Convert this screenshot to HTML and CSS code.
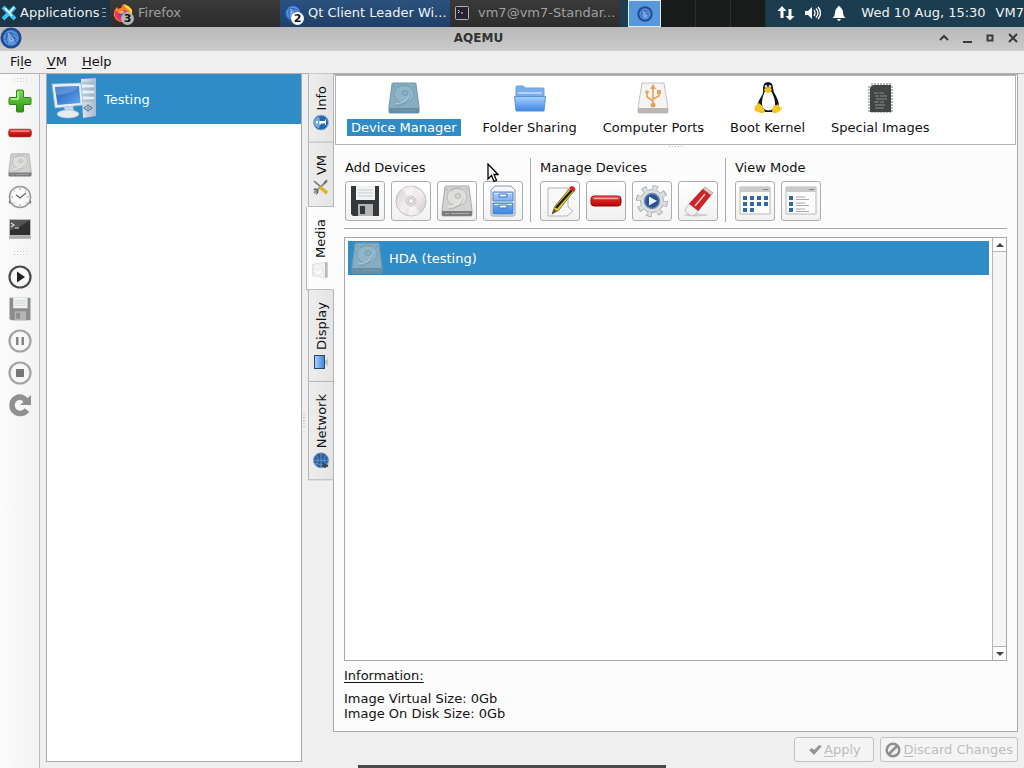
FILE: index.html
```html
<!DOCTYPE html>
<html lang="en">
<head>
    <meta charset="UTF-8">
    <meta name="viewport" content="width=device-width, initial-scale=1.0">
    <title>AQEMU</title>
    <link rel="stylesheet" href="styles.css">
</head>
<body>
    <!-- Icon set -->
    <svg class="sprite" aria-hidden="true">
        <defs>
            <linearGradient id="gBlue" x1="0" y1="0" x2="0" y2="1"><stop offset="0" stop-color="#a9d0ff"/><stop offset="1" stop-color="#3f86e0"/></linearGradient>
            <linearGradient id="gScreen" x1="0" y1="0" x2="1" y2="1"><stop offset="0" stop-color="#1c58b0"/><stop offset="1" stop-color="#66a9f2"/></linearGradient>
            <linearGradient id="gRed" x1="0" y1="0" x2="0" y2="1"><stop offset="0" stop-color="#f07070"/><stop offset="0.4" stop-color="#dd2020"/><stop offset="1" stop-color="#b00808"/></linearGradient>
            <linearGradient id="gGreen" x1="0" y1="0" x2="0" y2="1"><stop offset="0" stop-color="#7fdc50"/><stop offset="1" stop-color="#2a9410"/></linearGradient>
            <linearGradient id="gDisc" x1="0" y1="0" x2="1" y2="1"><stop offset="0" stop-color="#d6d0d2"/><stop offset="0.5" stop-color="#f4eef0"/><stop offset="1" stop-color="#cfc8ca"/></linearGradient>
            <linearGradient id="gTower" x1="0" y1="0" x2="1" y2="0"><stop offset="0" stop-color="#dfe7ef"/><stop offset="1" stop-color="#a8bccd"/></linearGradient>
        </defs>
        <symbol id="qemu" viewBox="0 0 24 24">
            <circle cx="12" cy="12" r="11.5" fill="#1f4c92"/>
            <circle cx="12" cy="12" r="8.5" fill="#5c92da"/>
            <path d="M5 8q7-4 14 2M5 14l7-8 6 11M8 18q-2-6 0-11q6 5 10 6" fill="none" stroke="#2b5fa8" stroke-width="1"/>
            <path d="M9 7l6 7-4 2z" fill="none" stroke="#b9d4f7" stroke-width="0.8"/>
        </symbol>
        <symbol id="xfce" viewBox="0 0 16 16">
            <path d="M2 2l12 12M14 2L2 14" stroke="#3fc0ee" stroke-width="4"/>
            <path d="M4 3l7 8M13 2L8 8" stroke="#e8f8ff" stroke-width="1.5"/>
        </symbol>
        <symbol id="firefox" viewBox="0 0 20 20">
            <path d="M10 1q3 1 4 4q5 3 4 8q-2 6-8 6q-7 0-9-6q-1-5 3-9l1 2q2-1 3-1z" fill="#ff7a2a"/>
            <path d="M11 1q1 4 5 6q2 4 0 8q4-3 3-8q-2-4-8-6z" fill="#ffd83a"/>
            <path d="M2 8q-1 7 5 10q5 1 8-1q-8 0-9-7z" fill="#ef2e64"/>
            <circle cx="10" cy="11" r="4" fill="#7b3fd0"/>
            <path d="M5 9l4-2 3 2-4 2z" fill="#ffae35"/>
        </symbol>
        <symbol id="term" viewBox="0 0 14 14">
            <rect x="0.5" y="0.5" width="13" height="13" rx="1" fill="#2a2230" stroke="#b4adb8"/>
            <path d="M3 4l1.500 1.500L3 7M6 7h2" fill="none" stroke="#ddd"/>
        </symbol>
        <symbol id="net" viewBox="0 0 18 16">
            <path d="M5 1l4.500 5H6.500v7H3.500V6H.5zM13 15.500L8.500 11h3V4h3v7h3z" fill="#fff"/>
        </symbol>
        <symbol id="volume" viewBox="0 0 16 14">
            <path d="M0 5h3l4-4v12L3 9H0z" fill="#fff"/>
            <path d="M9 4q2 3 0 6M11 2.500q4 4.500 0 9M13 1q5 6 0 12" fill="none" stroke="#fff" stroke-width="1.300"/>
        </symbol>
        <symbol id="bell" viewBox="0 0 14 16">
            <path d="M7 1q1.500 0 1.500 1.500Q11 4 11 8q0 3 2.500 5H.5Q3 11 3 8q0-4 2.500-5.500Q5.500 1 7 1zM5 14h4q-1 2-2 2t-2-2z" fill="#fff"/>
        </symbol>
        <symbol id="computer" viewBox="0 0 46 42">
            <path d="M30 1l15-1v38l-13 2z" fill="url(#gTower)"/>
            <path d="M31 5h12M31 11h12M31 17h12M31 23h12" stroke="#8fabc3"/>
            <path d="M31 8h12M31 14h12M31 20h12" stroke="#f2f6fa" stroke-width="1.500"/>
            <path d="M1 6l29-1 2 22-28 3z" fill="#e6eff8" stroke="#9db9d3" stroke-width="0.700"/>
            <path d="M4 9l24-1 1.500 17-23 2z" fill="url(#gScreen)"/>
            <path d="M4 9l24-1Q23 16 5 17z" fill="#7bb1ec" opacity="0.500"/>
            <path d="M13 29l9-1 1 5h-9z" fill="#c8d6e4"/>
            <ellipse cx="17" cy="36" rx="11" ry="4" fill="#e4ecf4" stroke="#a8bccf" stroke-width="0.700"/>
            <path d="M33 30l4-3 4 3-4 3z" fill="none" stroke="#6c8397" stroke-width="1.300"/>
            <circle cx="37" cy="30" r="1" fill="#6c8397"/>
        </symbol>
        <symbol id="plus" viewBox="0 0 24 24">
            <path d="M9.500 1h5q1 0 1 1v6.500H22q1 0 1 1v5q0 1-1 1h-6.500V22q0 1-1 1h-5q-1 0-1-1v-6.500H2q-1 0-1-1v-5q0-1 1-1h6.500V2q0-1 1-1z" fill="url(#gGreen)" stroke="#2f8518"/>
            <path d="M10 3v7H3" fill="none" stroke="#b8f598" stroke-width="1.500"/>
        </symbol>
        <symbol id="minus" viewBox="0 0 32 32">
            <rect x="1" y="11" width="30" height="10" rx="3" fill="url(#gRed)" stroke="#8e0a0a"/>
            <path d="M4 13.500h24" stroke="#f6a0a0" stroke-width="1.500"/>
        </symbol>
        <symbol id="hdd" viewBox="0 0 32 32">
            <path d="M5 1h22q1 0 1 1l3 23v5q0 1-1 1H2q-1 0-1-1v-5L4 2q0-1 1-1z" fill="var(--disk)" stroke="var(--disk-line)"/>
            <path d="M1 26h30v4q0 1-1 1H2q-1 0-1-1z" fill="var(--disk-base)"/>
            <ellipse cx="16" cy="12" rx="10" ry="9" fill="var(--disk-plate)" stroke="var(--disk-line)" stroke-width="0.700"/>
            <ellipse cx="17" cy="11" rx="3" ry="2.500" fill="var(--disk)" stroke="var(--disk-line)" stroke-width="0.700"/>
            <path d="M7 24q12 0 15-11M9 6q5-4 12-2M6 3v3M26 3v3" fill="none" stroke="var(--disk-line)" stroke-width="0.800"/>
            <path d="M7 22q12-1 14-9" fill="none" stroke="var(--disk-shine)"/>
            <path d="M4 28.500h4M10 28.500h18" stroke="var(--disk-line)"/>
        </symbol>
        <symbol id="clock" viewBox="0 0 24 24">
            <path d="M2 15l-1 3h3M22 15l1 3h-3" stroke="#777" fill="none"/>
            <circle cx="12" cy="12" r="10.500" fill="#fafafa" stroke="#999" stroke-width="1.500"/>
            <path d="M12 3v2M12 19v2M3 12h2M19 12h2M5.500 5.500l1 1M18.500 5.500l-1 1M5.500 18.500l1-1M18.500 18.500l-1-1" stroke="#999"/>
            <path d="M8 10l4 3 6-5" fill="none" stroke="#666" stroke-width="1.200"/>
        </symbol>
        <symbol id="console" viewBox="0 0 24 24">
            <path d="M1 2h22v20H1z" fill="#bbb"/>
            <path d="M2 3h20v15H2z" fill="#303030"/>
            <path d="M2 3h20L8 12l-6 1z" fill="#555"/>
            <path d="M3 6l3 2-3 2M7 11h4" fill="none" stroke="#ddd" stroke-width="1.200"/>
            <path d="M2 20h20" stroke="#999"/>
        </symbol>
        <symbol id="play" viewBox="0 0 24 24">
            <circle cx="12" cy="12" r="10.500" fill="#f6f6f6" stroke="#4a4a4a" stroke-width="2.200"/>
            <path d="M9 6.500l8 5.500-8 5.500z" fill="#222"/>
        </symbol>
        <symbol id="pause" viewBox="0 0 24 24">
            <circle cx="12" cy="12" r="10.500" fill="#f6f6f6" stroke="#a2a2a2" stroke-width="2.200"/>
            <path d="M8 8h2.500v8H8zM13.500 8H16v8h-2.500z" fill="#858585"/>
        </symbol>
        <symbol id="stop" viewBox="0 0 24 24">
            <circle cx="12" cy="12" r="10.500" fill="#f6f6f6" stroke="#a2a2a2" stroke-width="2.200"/>
            <path d="M8 8h8v8H8z" fill="#777"/>
        </symbol>
        <symbol id="reload" viewBox="0 0 24 24">
            <path d="M19 17q-3 4-8 3.500q-7-1.500-7-8.500q0-6 7-8q5 0 7 4" fill="none" stroke="#909090" stroke-width="5.500"/>
            <path d="M23 2v10H12z" fill="#909090"/>
        </symbol>
        <symbol id="floppy" viewBox="0 0 32 32">
            <path d="M2 1h28v30H4l-2-2z" fill="var(--floppy)"/>
            <path d="M7 1h19v14H7z" fill="#f2f4f4"/>
            <path d="M9 5h15M9 8h15M9 11h15" stroke="#c3cccf"/>
            <path d="M9 19h15v12H9z" fill="#b4b4b4"/>
            <path d="M11 21h5v8h-5z" fill="var(--floppy)"/>
        </symbol>
        <symbol id="disc" viewBox="0 0 32 32">
            <circle cx="16" cy="16" r="15" fill="url(#gDisc)" stroke="#c4bcbe"/>
            <path d="M16 16L7 4q5-4 12-2zM16 16l9 12q-6 4-12 2z" fill="#fff" opacity="0.500"/>
            <circle cx="16" cy="16" r="5" fill="#e3dcde" stroke="#cdc5c7"/>
            <circle cx="16" cy="16" r="2.500" fill="#fff" stroke="#c2b9bb"/>
        </symbol>
        <symbol id="cabinet" viewBox="0 0 32 32">
            <path d="M8 1h16l4 4v24q0 2-2 2H6q-2 0-2-2V5z" fill="#f3f6f9" stroke="#8d97a3"/>
            <path d="M6 7h20v9H6zM6 18h20v11H6z" fill="url(#gBlue)" stroke="#4a80c8"/>
            <path d="M7 8.500h18M7 19.500h18" stroke="#dcebff"/>
            <path d="M12 9h8v3h-8zM12 20h8v3h-8z" fill="#e8f2ff" stroke="#3b74bd"/>
        </symbol>
        <symbol id="edit" viewBox="0 0 32 32">
            <path d="M4 3h20v19l5 4-6 5H4z" fill="#f8f8f8" stroke="#b5b5b5"/>
            <path d="M8 29l3-8L26 3l4 3-15 19z" fill="#e6d22e" stroke="#55501a" stroke-width="0.700"/>
            <path d="M12 23L28 5" stroke="#1f1f1f" stroke-width="2.500"/>
            <path d="M25 3q3-4 6 0 1 2-1 4z" fill="#d8262c"/>
            <path d="M8 29l2-5 3 2z" fill="#5a4b38"/>
        </symbol>
        <symbol id="gear" viewBox="0 0 32 32">
            <circle cx="16" cy="16" r="13.500" fill="none" stroke="#a8acb0" stroke-width="5" stroke-dasharray="5.300 5.300"/>
            <circle cx="16" cy="16" r="11.500" fill="#dcdfe2" stroke="#a8acb0"/>
            <circle cx="16" cy="16" r="13" fill="none" stroke="#dcdfe2" stroke-width="4" stroke-dasharray="3.900 6.310" stroke-dashoffset="-0.700"/>
            <circle cx="16" cy="16" r="7.500" fill="#2d528f" stroke="#7088ac" stroke-width="1.500"/>
            <path d="M13 11.500l8 4.500-8 4.500z" fill="#e8f3ff"/>
        </symbol>
        <symbol id="eraser" viewBox="0 0 32 32">
            <ellipse cx="14" cy="30" rx="12" ry="1.500" fill="#ccc"/>
            <path d="M21 4l8 6-13 16-9-7z" fill="#cf2323" stroke="#8f3030" stroke-width="0.700"/>
            <path d="M21 4l2-2 8 6-2 2z" fill="#dcc" stroke="#a88" stroke-width="0.700"/>
            <path d="M7 19l9 7-3 4-4 1-6-5 1-3z" fill="#f4eeee" stroke="#aaa" stroke-width="0.700"/>
            <path d="M23 9L13 21" stroke="#f3c5c5" stroke-width="1.600"/>
        </symbol>
        <symbol id="grid" viewBox="0 0 32 32">
            <path d="M1 2h30v27H1z" fill="#fdfdfd" stroke="#b8b8b8"/>
            <path d="M1 2h30v5H1z" fill="#c9c9c9"/>
            <path d="M24 4.500h5" stroke="#888"/>
            <path d="M4 11h4v4H4zM11 11h4v4h-4zM18 11h4v4h-4zM25 11h4v4h-4zM4 17h4v4H4zM11 17h4v4h-4zM18 17h4v4h-4zM25 17h4v4h-4zM4 23h4v4H4zM11 23h4v4h-4z" fill="#2f6aae"/>
        </symbol>
        <symbol id="rows" viewBox="0 0 32 32">
            <path d="M1 2h30v27H1z" fill="#fdfdfd" stroke="#b8b8b8"/>
            <path d="M1 2h30v5H1z" fill="#c9c9c9"/>
            <path d="M24 4.500h5" stroke="#888"/>
            <path d="M4 11h4v4H4zM4 17h4v4H4zM4 23h4v4H4z" fill="#2f6aae"/>
            <path d="M11 12h9M11 14.500h13M11 18h9M11 20.500h13M11 24h9M11 26.500h13" stroke="#aaa"/>
        </symbol>
        <symbol id="folder" viewBox="0 0 32 32">
            <path d="M2 5q0-1 1-1h6q1 0 2 2h18q1 0 1 1v9H2z" fill="#78aeee" stroke="#6a9cdc"/>
            <path d="M4 11h24" stroke="#b3d3f8" stroke-width="2"/>
            <path d="M.5 14.500h31L30 29H2z" fill="url(#gBlue)" stroke="#5a8fd4"/>
        </symbol>
        <symbol id="usb" viewBox="0 0 32 32">
            <path d="M5 1h22l4 25v4q0 1-1 1H2q-1 0-1-1v-4z" fill="#f6f4f2" stroke="#c5c2bf"/>
            <path d="M1 26h30v4q0 1-1 1H2q-1 0-1-1z" fill="#b9b5b2"/>
            <path d="M16 23V5M16 19l-6-4v-4M16 17l6-3v-4" fill="none" stroke="#e8a255" stroke-width="1.600"/>
            <path d="M13 7l3-5 3 5z" fill="#e8a255"/>
            <circle cx="16" cy="23" r="2.500" fill="#e8a255"/>
            <circle cx="10" cy="10" r="1.800" fill="#e8a255"/>
            <path d="M20 8h4v4h-4z" fill="#e8a255"/>
        </symbol>
        <symbol id="tux" viewBox="0 0 28 32">
            <path d="M14 0q5 0 5 6 0 4 3 8 4 7 3 13l-6 3H9l-6-4q0-5 4-11 3-4 2-8 0-7 5-7z" fill="#111"/>
            <path d="M11 9q4 2 6 0 5 8 4 17-7 5-12 0-3-6 2-17z" fill="#fff"/>
            <path d="M10 7l4-2 4 2q-1 4-4 4t-4-4z" fill="#f2c21c"/>
            <circle cx="12" cy="4.500" r="1.400" fill="#ddd"/><circle cx="16" cy="4.500" r="1.400" fill="#ddd"/>
            <path d="M4 21q3 0 7 8-1 3-4 2l-6-2q-1-2 0-5 2 0 3-3zM20 23q3 1 4-1 1 3 4 4-1 3-6 5-4 1-4-2z" fill="#f7c520"/>
        </symbol>
        <symbol id="chip" viewBox="0 0 28 32">
            <path d="M6 1v30M9 1v30M12 1v30M15 1v30M18 1v30M21 1v30M24 1v30M2 5h25M2 8h25M2 11h25M2 14h25M2 17h25M2 20h25M2 23h25M2 26h25M2 29h25" stroke="#777"/>
            <path d="M7 3h18v27H4V6z" fill="#424545"/>
            <path d="M8 11h4M13 11h5M9 14h4M14 14h7M10 17h11M8 20h5M14 20h4M9 23h10M9 26h9" stroke="#8c8f8f"/>
        </symbol>
        <symbol id="info" viewBox="0 0 16 16">
            <circle cx="8" cy="8" r="7.500" fill="#2468b0" stroke="#8fb3d8"/>
            <path d="M2 6q2-5 6-5t6 5q-6 2-12 0z" fill="#75a9dc"/>
            <path d="M7 3h2.500v2H7zM6 6.500h3.500V12H11v1H5.500v-1H7V8H6z" fill="#fff"/>
        </symbol>
        <symbol id="tools" viewBox="0 0 16 16">
            <path d="M2 1l12 13" stroke="#8c8c8c" stroke-width="2"/>
            <path d="M1 3q2 3 4 1t0-3M12 11l3 3" fill="none" stroke="#666" stroke-width="1.500"/>
            <path d="M14 1L9 7" stroke="#777" stroke-width="1.500"/>
            <path d="M8 7L2 14" stroke="#dfb51d" stroke-width="3.500"/>
        </symbol>
        <symbol id="display" viewBox="0 0 16 16">
            <path d="M1 1h14v11H1z" fill="#234868"/>
            <path d="M2 2h12v9H2z" fill="url(#gBlue)"/>
            <path d="M6 12h4v2h2v1H4v-1h2z" fill="#c4c4b8"/>
        </symbol>
        <symbol id="globe" viewBox="0 0 16 16">
            <circle cx="8" cy="8" r="7.500" fill="#285e9e" stroke="#7e9bbd"/>
            <path d="M1 8h14M8 1v14M3 3q5 4 10 0M3 13q5-4 10 0M5 2q-3 6 0 12" fill="none" stroke="#7fa6d2" stroke-width="0.700"/>
            <path d="M5 10l-3 5M3 9l-2 4" stroke="#39444f" stroke-width="2"/>
        </symbol>
        <symbol id="check" viewBox="0 0 14 12">
            <path d="M1 6l3-2 2 2 5-5 3 1-8 9z" fill="#969696"/>
        </symbol>
        <symbol id="forbid" viewBox="0 0 16 16">
            <circle cx="8" cy="8" r="6.300" fill="#f0f0f0" stroke="#8e8e8e" stroke-width="2.500"/>
            <path d="M4 12l8-8" stroke="#8e8e8e" stroke-width="2.500"/>
        </symbol>
    </svg>

    <!-- Desktop panel -->
    <header class="taskbar">
        <button class="task apps"><svg class="icon-16"><use href="#xfce"/></svg>Applications<span class="grip"></span></button>
        <button class="task"><span class="badged"><svg class="icon-20"><use href="#firefox"/></svg><b class="badge dim">3</b></span>Firefox</button>
        <button class="task active"><span class="badged"><svg class="icon-20"><use href="#qemu"/></svg><b class="badge">2</b></span><span class="task-name">Qt Client Leader Wi...</span></button>
        <button class="task term"><svg class="icon-14"><use href="#term"/></svg><span class="task-name">vm7@vm7-Standar...</span></button>
        <div class="pager">
            <button class="desk current" aria-label="Workspace 1"><svg class="icon-16"><use href="#qemu"/></svg></button>
            <button class="desk" aria-label="Workspace 2"></button>
            <button class="desk" aria-label="Workspace 3"></button>
            <button class="desk" aria-label="Workspace 4"></button>
        </div>
        <div class="tray">
            <svg class="icon-18"><use href="#net"/></svg>
            <svg class="icon-16"><use href="#volume"/></svg>
            <svg class="icon-16"><use href="#bell"/></svg>
            <time>Wed 10 Aug, 15:30</time>
            <span>VM7</span>
        </div>
    </header>

    <div class="titlebar">
        <svg class="icon-22"><use href="#qemu"/></svg>
        <h1>AQEMU</h1>
        <div class="win-buttons">
            <button aria-label="Shade"><svg viewBox="0 0 12 12"><path d="M2 8l4-4 4 4"/></svg></button>
            <button aria-label="Minimize"><svg viewBox="0 0 12 12"><path d="M2 10h9"/></svg></button>
            <button aria-label="Maximize"><svg viewBox="0 0 12 12"><path d="M3.500 3.500h5v5h-5z"/></svg></button>
            <button aria-label="Close"><svg viewBox="0 0 12 12"><path d="M2 2l8 8M10 2l-8 8"/></svg></button>
        </div>
    </div>

    <nav class="menubar">
        <button>Fi<u>l</u>e</button>
        <button><u>V</u>M</button>
        <button><u>H</u>elp</button>
    </nav>

    <main class="window">
        <div class="toolbar">
            <span class="handle"></span>
            <button aria-label="Add VM"><svg class="icon-24"><use href="#plus"/></svg></button>
            <button aria-label="Delete VM"><svg class="icon-24"><use href="#minus"/></svg></button>
            <button aria-label="Create HDD image"><svg class="icon-24 disk"><use href="#hdd"/></svg></button>
            <button aria-label="Snapshots"><svg class="icon-24"><use href="#clock"/></svg></button>
            <button aria-label="Console"><svg class="icon-24"><use href="#console"/></svg></button>
            <span class="handle tall"></span>
            <button aria-label="Start"><svg class="icon-24"><use href="#play"/></svg></button>
            <button aria-label="Save"><svg class="icon-24 gray"><use href="#floppy"/></svg></button>
            <button aria-label="Pause"><svg class="icon-24"><use href="#pause"/></svg></button>
            <button aria-label="Stop"><svg class="icon-24"><use href="#stop"/></svg></button>
            <button aria-label="Reset"><svg class="icon-24"><use href="#reload"/></svg></button>
        </div>

        <ul class="vm-list">
            <li class="selected"><svg class="vm-icon"><use href="#computer"/></svg>Testing</li>
        </ul>

        <div class="splitter"></div>

        <div class="details">
            <div class="tabbed">
                <div class="tabs" role="tablist">
                    <button role="tab"><svg class="icon-16"><use href="#info"/></svg>Info</button>
                    <button role="tab"><svg class="icon-16"><use href="#tools"/></svg>VM</button>
                    <button role="tab" class="current" aria-selected="true"><svg class="icon-16 disk pale"><use href="#hdd"/></svg>Media</button>
                    <button role="tab"><svg class="icon-16"><use href="#display"/></svg>Display</button>
                    <button role="tab"><svg class="icon-16"><use href="#globe"/></svg>Network</button>
                </div>

                <section class="panel">
                    <div class="sections">
                        <button class="current"><svg class="icon-32 disk tinted"><use href="#hdd"/></svg><span>Device Manager</span></button>
                        <button><svg class="icon-32"><use href="#folder"/></svg><span>Folder Sharing</span></button>
                        <button><svg class="icon-32"><use href="#usb"/></svg><span>Computer Ports</span></button>
                        <button><svg class="icon-32"><use href="#tux"/></svg><span>Boot Kernel</span></button>
                        <button><svg class="icon-32"><use href="#chip"/></svg><span>Special Images</span></button>
                    </div>
                    <div class="dots"></div>

                    <div class="content">
                        <div class="groups">
                            <div class="group">
                                <h2>Add Devices</h2>
                                <div class="tools">
                                    <button aria-label="Add floppy"><svg class="icon-32"><use href="#floppy"/></svg></button>
                                    <button aria-label="Add CD-ROM"><svg class="icon-32"><use href="#disc"/></svg></button>
                                    <button aria-label="Add HDD"><svg class="icon-32 disk"><use href="#hdd"/></svg></button>
                                    <button aria-label="Add device"><svg class="icon-32"><use href="#cabinet"/></svg></button>
                                </div>
                            </div>
                            <div class="group">
                                <h2>Manage Devices</h2>
                                <div class="tools">
                                    <button aria-label="Edit"><svg class="icon-32"><use href="#edit"/></svg></button>
                                    <button aria-label="Delete"><svg class="icon-32"><use href="#minus"/></svg></button>
                                    <button aria-label="Format"><svg class="icon-32"><use href="#gear"/></svg></button>
                                    <button aria-label="Quick format"><svg class="icon-32"><use href="#eraser"/></svg></button>
                                </div>
                            </div>
                            <div class="group">
                                <h2>View Mode</h2>
                                <div class="tools">
                                    <button aria-label="Icon view"><svg class="icon-32"><use href="#grid"/></svg></button>
                                    <button aria-label="List view"><svg class="icon-32"><use href="#rows"/></svg></button>
                                </div>
                            </div>
                        </div>

                        <div class="devices">
                            <ul>
                                <li class="selected"><svg class="icon-32 disk tinted"><use href="#hdd"/></svg>HDA (testing)</li>
                            </ul>
                            <div class="scrollbar">
                                <button aria-label="Scroll up"><svg viewBox="0 0 8 4"><path d="M0 4l4-4 4 4z"/></svg></button>
                                <button aria-label="Scroll down"><svg viewBox="0 0 8 4"><path d="M0 0l4 4 4-4z"/></svg></button>
                            </div>
                        </div>

                        <h3>Information:</h3>
                        <p>Image Virtual Size: 0Gb<br>Image On Disk Size: 0Gb</p>
                    </div>
                </section>
            </div>

            <div class="actions">
                <button disabled><svg class="icon-14"><use href="#check"/></svg><span><u>A</u>pply</span></button>
                <button disabled><svg class="icon-16"><use href="#forbid"/></svg><span><u>D</u>iscard Changes</span></button>
            </div>
        </div>
    </main>

    <svg class="pointer" viewBox="0 0 12 20"><path d="M1 1v15l3.500-3.500 2.500 6 2.500-1-2.500-6H11z" fill="#fff" stroke="#000" stroke-width="1.300"/></svg>
    <div class="dock"></div>
</body>
</html>
```
FILE: styles.css
```css
/* Global Styles */
* {
    margin: 0;
    padding: 0;
    box-sizing: border-box;
}

body {
    --floppy: #34383b;
    display: flex;
    flex-direction: column;
    position: relative;
    height: 100vh;
    overflow: hidden;
    background: #efefef;
    color: #111;
    font: 13px/15px "DejaVu Sans", sans-serif;
}

button {
    border: none;
    background: none;
    color: inherit;
    font: inherit;
}

ul {
    list-style: none;
}

h2,
h3 {
    font: inherit;
}

u {
    text-underline-offset: 2px;
}

svg {
    display: block;
    flex: none;
}

.sprite {
    position: absolute;
    width: 0;
    height: 0;
}

/* Icon sizes and tints */
.icon-14 { width: 14px; height: 14px; }
.icon-16 { width: 16px; height: 16px; }
.icon-18 { width: 18px; height: 16px; }
.icon-20 { width: 20px; height: 20px; }
.icon-22 { width: 22px; height: 22px; }
.icon-24 { width: 24px; height: 24px; }
.icon-32 { width: 32px; height: 32px; }

.gray {
    --floppy: #8c8c8c;
}

.disk {
    --disk: #d2d2d0;
    --disk-base: #7c7c7c;
    --disk-plate: #dededc;
    --disk-line: #acacaa;
    --disk-shine: #f4f4f4;
}

.disk.tinted {
    --disk: #86adc2;
    --disk-base: #668da4;
    --disk-plate: #90b5c8;
    --disk-line: #7098ae;
    --disk-shine: #b4cfdc;
}

.disk.pale {
    --disk: #f2f2f2;
    --disk-base: #b5b5b5;
    --disk-plate: #fafafa;
    --disk-line: #ccc;
}

/* Desktop panel */
.taskbar {
    display: flex;
    height: 27px;
    background: #1c3d50;
    color: #eef3f5;
    white-space: nowrap;
}

.task {
    display: flex;
    align-items: center;
    gap: 4px;
    width: 170px;
    padding: 0 3px 2px;
    background: linear-gradient(#3a3a3a, #2c2c2c);
    color: #a0a0a0;
}

.task.apps {
    width: 110px;
    gap: 3px;
    padding: 0 1px 2px;
    background: #1c3445;
    color: #eef3f5;
}

.task.active {
    background: linear-gradient(#2b527f, #1f3f66);
    color: #eef3f5;
}

.task.term {
    gap: 9px;
    padding: 0 5px 2px;
}

.grip {
    width: 4px;
    height: 10px;
    background: repeating-linear-gradient(#90a0aa 0 1px, transparent 1px 4px);
}

.badged {
    position: relative;
    padding-right: 1px;
}

.badge {
    position: absolute;
    left: 8px;
    top: 9px;
    width: 13px;
    height: 13px;
    border-radius: 50%;
    background: #fff;
    color: #111;
    font-size: 11px;
    line-height: 13px;
}

.badge.dim {
    background: #b5b5b5;
}

.pager {
    display: flex;
    margin-left: 8px;
    background: #191b1b;
}

.desk {
    width: 35px;
    border-right: 1px solid #2b2d2d;
}

.desk.current {
    display: flex;
    align-items: center;
    justify-content: center;
    width: 33px;
    border: 1px solid #e4edf6;
    background: #5798dc;
}

.tray {
    display: flex;
    flex: 1;
    align-items: center;
    justify-content: flex-end;
    gap: 10px;
    padding-bottom: 2px;
}

.tray time {
    margin-left: 4px;
}

/* Window frame */
.titlebar {
    display: flex;
    align-items: center;
    height: 24px;
    padding-bottom: 2px;
    background: linear-gradient(#b9b9b9, #cbcbcb);
}

.titlebar h1 {
    flex: 1;
    padding-right: 3px;
    color: #333;
    font-size: 12px;
    text-align: center;
}

.win-buttons {
    display: flex;
    gap: 11px;
    padding-right: 5px;
}

.win-buttons svg {
    width: 12px;
    height: 12px;
    fill: none;
    stroke: #3a3a3a;
    stroke-width: 2;
}

.menubar {
    display: flex;
    gap: 15px;
    height: 22px;
    padding: 0 10px 2px;
}

/* Main area */
.window {
    display: flex;
    flex: 1;
    min-height: 0;
    border-top: 1px solid #b2b2b2;
}

.toolbar {
    display: flex;
    flex-direction: column;
    align-items: center;
    width: 40px;
    border-right: 1px solid #b8b8b8;
    background: linear-gradient(90deg, #fcfcfc, #f2f2f2);
}

.toolbar button {
    padding: 4px;
}

.handle {
    width: 14px;
    height: 11px;
    padding: 3px 0 2px;
    background: radial-gradient(#ccc 1px, transparent 1px) 0 0 / 3px 3px content-box;
}

.handle.tall {
    height: 16px;
    padding: 5px 0;
}

.vm-list {
    width: 256px;
    margin: 0 0 6px 6px;
    border: 1px solid #a8a8a8;
    border-top: none;
    background: #fff;
}

.vm-list li {
    display: flex;
    align-items: center;
    gap: 7px;
    height: 50px;
    padding-left: 4px;
}

.vm-icon {
    width: 46px;
    height: 42px;
}

.selected {
    background: #308cc6;
    color: #fff;
}

.splitter {
    align-self: center;
    width: 4px;
    height: 16px;
    background: radial-gradient(#c4c4c4 1px, transparent 1px) 0 0 / 4px 3px;
}

.details {
    display: flex;
    flex: 1;
    flex-direction: column;
    min-width: 0;
    padding-right: 6px;
}

.tabbed {
    display: flex;
    flex: 1;
    min-height: 0;
}

/* Vertical tabs, text runs from bottom to top */
.tabs {
    display: flex;
    flex-direction: column;
    align-items: flex-end;
    width: 28px;
    margin-right: -1px;
    z-index: 1;
}

.tabs button {
    display: flex;
    align-items: center;
    justify-content: center;
    gap: 4px;
    width: 26px;
    padding: 11px 0 12px;
    border: 1px solid #b4b4b4;
    border-bottom: none;
    background: linear-gradient(90deg, #e4e4e4, #ededed);
    writing-mode: vertical-rl;
    transform: rotate(180deg);
}

.tabs button svg {
    transform: rotate(90deg);
}

.tabs .current {
    width: 28px;
    border-left-color: #fcfcfc;
    background: #fcfcfc;
}

.panel {
    display: flex;
    flex: 1;
    flex-direction: column;
    min-width: 0;
    padding: 0 1px;
    border: 1px solid #a8a8a8;
    background: #fcfcfc;
}

.sections {
    display: flex;
    gap: 18px;
    height: 70px;
    padding: 6px 11px;
    border: 1px solid #b4b4b4;
    background: #fff;
}

.sections button {
    display: flex;
    flex-direction: column;
    align-items: center;
    gap: 5px;
}

.sections span {
    padding: 1px 4px;
}

.sections .current span {
    background: #308cc6;
    color: #fff;
}

.dots {
    align-self: center;
    width: 16px;
    height: 4px;
    background: radial-gradient(#bbb 1px, transparent 1px) 0 0 / 3px 3px;
}

.content {
    display: flex;
    flex: 1;
    flex-direction: column;
    min-height: 0;
    padding: 9px 9px 10px;
}

.groups {
    display: flex;
    padding-bottom: 6px;
    border-bottom: 1px solid #a8a8a8;
}

.group {
    padding: 2px 7px 1px 9px;
    border-left: 1px solid #a8a8a8;
}

.group:first-child {
    padding-left: 1px;
    border-left: none;
}

.tools {
    display: flex;
    gap: 6px;
    margin-top: 6px;
}

.tools button {
    width: 40px;
    height: 40px;
    padding: 3px;
    border: 1px solid #adadad;
    border-radius: 3px;
    background: linear-gradient(#fff, #f1f1f1);
}

.devices {
    display: flex;
    flex: 1;
    min-height: 0;
    margin: 8px 0 7px;
    border: 1px solid #a8a8a8;
    background: #fff;
}

.devices ul {
    flex: 1;
    padding: 3px;
}

.devices li {
    display: flex;
    align-items: center;
    gap: 6px;
    padding: 1px 3px;
}

.scrollbar {
    display: flex;
    flex-direction: column;
    justify-content: space-between;
    width: 14px;
    border-left: 1px solid #b4b4b4;
    background: #f5f5f5;
}

.scrollbar button {
    display: flex;
    align-items: center;
    justify-content: center;
    height: 14px;
    border-bottom: 1px solid #b4b4b4;
    background: #fcfcfc;
}

.scrollbar button:last-child {
    border-top: 1px solid #b4b4b4;
    border-bottom: none;
}

.scrollbar svg {
    width: 8px;
    height: 4px;
    fill: #444;
}

.content h3 {
    margin-bottom: 8px;
    text-decoration: underline;
    text-underline-offset: 2px;
}

.actions {
    display: flex;
    justify-content: flex-end;
    gap: 6px;
    padding: 5px 0 6px;
}

.actions button {
    display: flex;
    align-items: center;
    justify-content: center;
    gap: 2px;
    min-width: 80px;
    height: 25px;
    padding: 0 4px;
    border: 1px solid #c2c2c2;
    border-radius: 3px;
    background: #f4f4f4;
    color: #bdbdbd;
}

/* Overlays */
.pointer {
    position: absolute;
    left: 487px;
    top: 163px;
    width: 12px;
    height: 20px;
}

.dock {
    position: absolute;
    left: 35%;
    right: 35%;
    bottom: 0;
    height: 3px;
    background: #4c4a4a;
}
```
